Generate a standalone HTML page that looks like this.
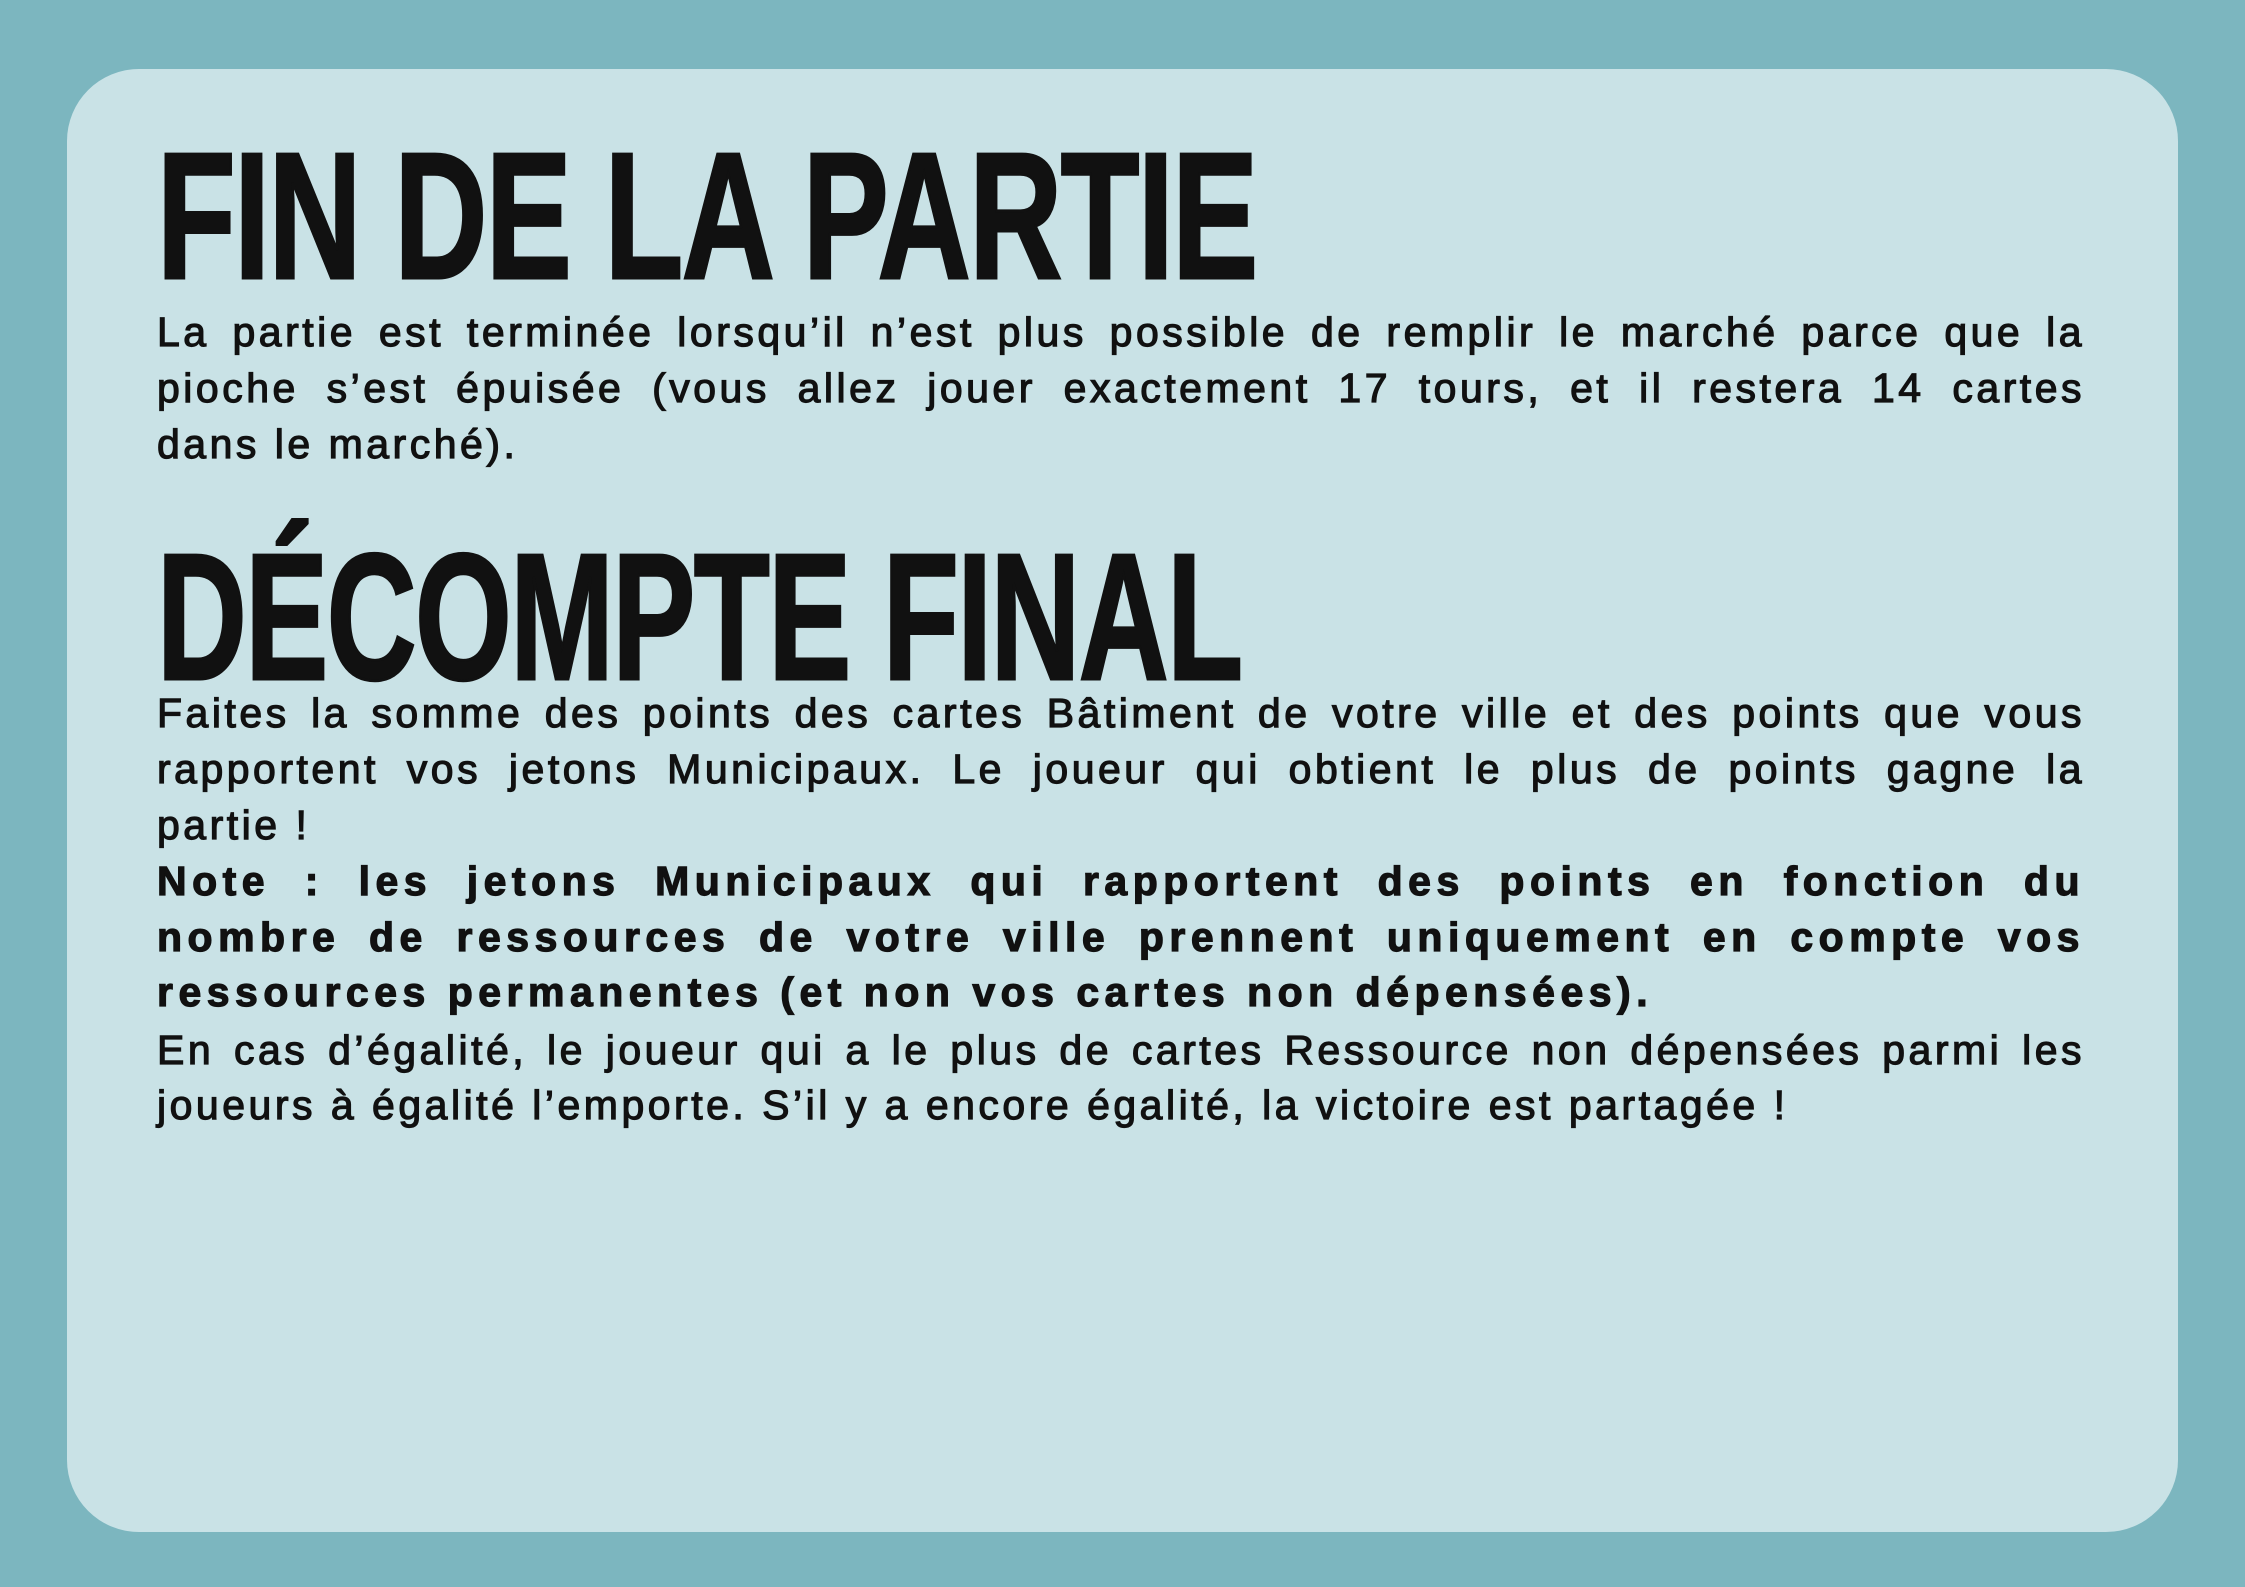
<!DOCTYPE html>
<html><head><meta charset="utf-8"><style>
html,body{margin:0;padding:0;}
body{width:2245px;height:1587px;background:#7cb6bf;position:relative;overflow:hidden;font-family:"Liberation Sans",sans-serif;color:#111;}
.card{position:absolute;left:67px;top:69px;width:2111px;height:1463px;background:#c9e2e6;border-radius:72px;}
.h{position:absolute;left:157px;font-weight:bold;font-size:180px;line-height:180px;white-space:nowrap;transform-origin:0 0;transform:scaleX(0.69);letter-spacing:-2px;-webkit-text-stroke:3px #111;}
.l{position:absolute;left:157px;width:1928px;height:56px;line-height:56px;font-size:41px;text-align:justify;text-align-last:justify;-webkit-text-stroke:1.2px #111;letter-spacing:3.5px;}
.l.e{text-align-last:left;}
.b{font-weight:bold;-webkit-text-stroke:1.2px #111;letter-spacing:5.5px;}
</style></head><body>
<div class="card"></div>
<div class="h" style="top:127px;transform:scaleX(0.715)">FIN DE LA PARTIE</div>
<div class="l" style="top:304px">La partie est terminée lorsqu’il n’est plus possible de remplir le marché parce que la</div>
<div class="l" style="top:360px">pioche s’est épuisée (vous allez jouer exactement 17 tours, et il restera 14 cartes</div>
<div class="l e" style="top:416px">dans le marché).</div>
<div class="h" style="top:528px">DÉCOMPTE FINAL</div>
<div class="l" style="top:685px">Faites la somme des points des cartes Bâtiment de votre ville et des points que vous</div>
<div class="l" style="top:741px">rapportent vos jetons Municipaux. Le joueur qui obtient le plus de points gagne la</div>
<div class="l e" style="top:797px">partie !</div>
<div class="l b" style="top:853px">Note : les jetons Municipaux qui rapportent des points en fonction du</div>
<div class="l b" style="top:909px">nombre de ressources de votre ville prennent uniquement en compte vos</div>
<div class="l b e" style="top:964px">ressources permanentes (et non vos cartes non dépensées).</div>
<div class="l" style="top:1022px">En cas d’égalité, le joueur qui a le plus de cartes Ressource non dépensées parmi les</div>
<div class="l e" style="top:1077px">joueurs à égalité l’emporte. S’il y a encore égalité, la victoire est partagée !</div>
</body></html>
